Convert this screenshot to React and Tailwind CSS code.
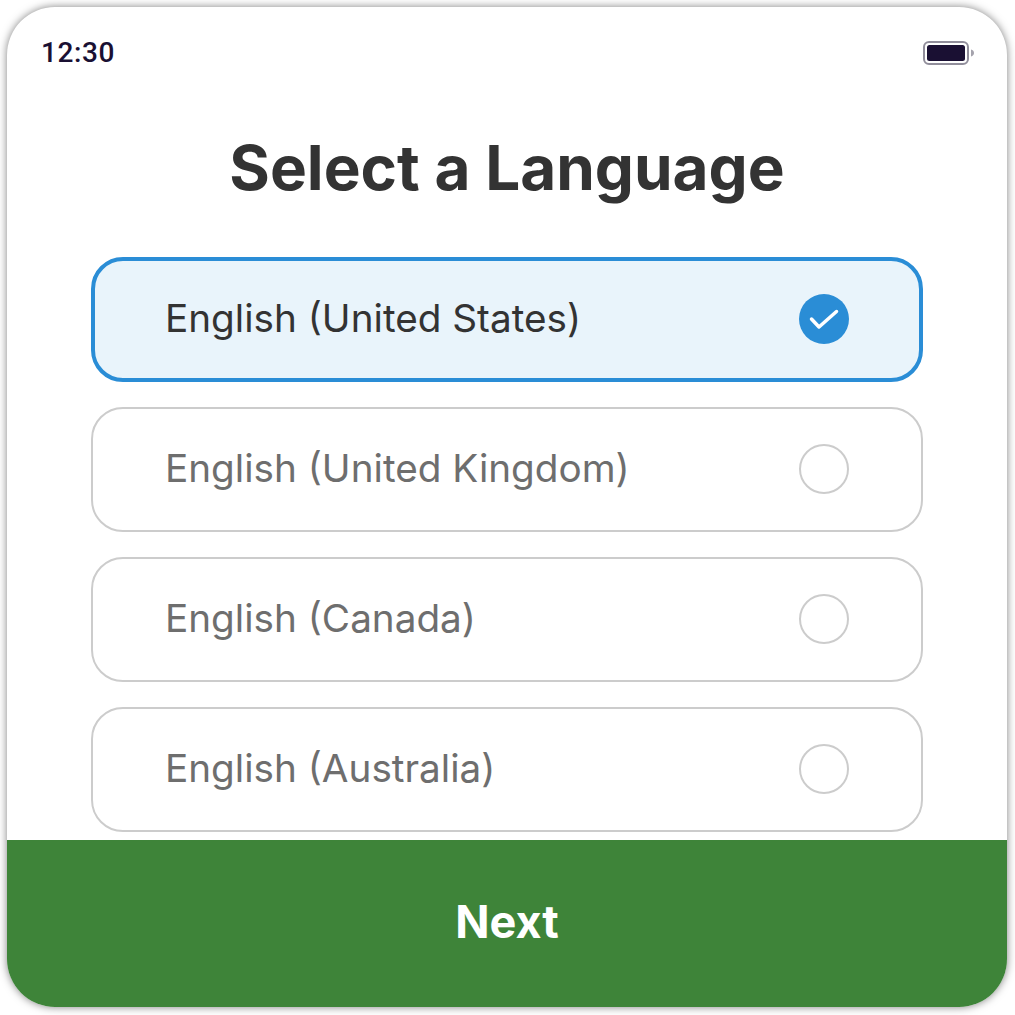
const languages = ['English (United States)', 'English (United Kingdom)', 'English (Canada)', 'English (Australia)'];

function Battery() {
  return (
    <svg width="52" height="26" viewBox="0 0 52 26" fill="none">
      <rect x="1" y="2" width="44" height="22" rx="5" stroke="#918e9b" strokeWidth="2" />
      <rect x="4" y="5" width="38" height="16" rx="2.5" fill="#1a1033" />
      <path d="M48 9.5c2 .6 3 1.900 3 3.500s-1 2.900-3 3.500z" fill="#a5a3ad" />
    </svg>
  );
}

function LanguageRow({ label, selected }) {
  return (
    <div className={selected
      ? 'h-[125px] flex items-center justify-between pl-[70px] pr-[70px] pb-[2px] rounded-[32px] border-4 border-[#2a8dd6] bg-[#e9f4fb]'
      : 'h-[125px] flex items-center justify-between pl-[72px] pr-[72px] pb-[2px] rounded-[32px] border-2 border-[#cccccc] bg-white'}>
      <span className={selected ? 'text-[38.7px] text-[#333333]' : 'text-[38.7px] text-[#6e6e6e]'}>{label}</span>
      {selected ? (
        <span className="w-[50px] h-[50px] rounded-full bg-[#2a8dd6] flex items-center justify-center">
          <svg width="30" height="24" viewBox="0 0 30 24" fill="none">
            <path d="M2.500 12L10 20L27.500 4.500" stroke="white" strokeWidth="3.500" strokeLinecap="round" strokeLinejoin="round" />
          </svg>
        </span>
      ) : (
        <span className="w-[50px] h-[50px] rounded-full border-2 border-[#cccccc]" />
      )}
    </div>
  );
}

export default function App() {
  return (
    <div className="w-[1015px] h-[1015px] bg-white p-[7px] font-['Inter',sans-serif]">
      <div className="w-[1000px] h-[1000px] flex flex-col rounded-[48px] overflow-hidden bg-white shadow-[0_0_8px_rgba(0,0,0,0.5)]">
        <div className="h-[92px] shrink-0 flex items-center justify-between pl-[34px] pr-[32px]">
          <span className="font-['Roboto',sans-serif] font-medium text-[28px] tracking-[0.6px] text-[#1a1033]">12:30</span>
          <Battery />
        </div>
        <h1 className="h-[158px] shrink-0 pt-[29px] text-center text-[62px] leading-[80px] font-bold text-[#333333]">Select a Language</h1>
        <div className="flex-1 flex flex-col gap-[25px] px-[84px]">
          {languages.map((l, i) => <LanguageRow key={l} label={l} selected={i === 0} />)}
        </div>
        <div className="h-[167px] shrink-0 pb-[3px] bg-[#3e8439] flex items-center justify-center">
          <span className="text-[45px] font-bold text-white">Next</span>
        </div>
      </div>
    </div>
  );
}
